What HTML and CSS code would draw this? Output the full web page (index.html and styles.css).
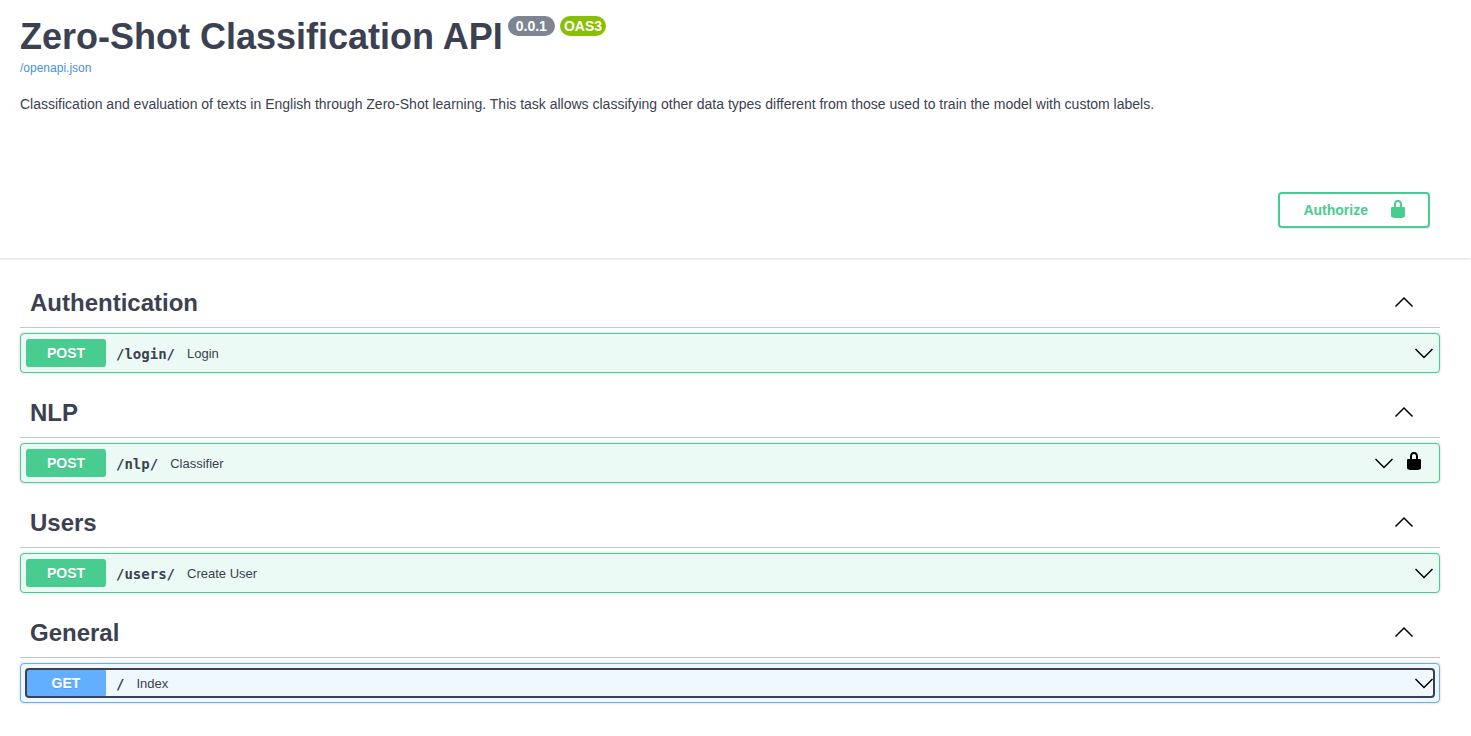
FILE: index.html
```html
<!DOCTYPE html>
<html lang="en">
<head>
<meta charset="utf-8">
<title>Zero-Shot Classification API</title>
<link rel="stylesheet" href="styles.css">
</head>
<body>
<svg class="sprite" aria-hidden="true">
  <symbol id="up" viewBox="0 0 20 20"><path d="M1.5 13.5 10 5 18.5 13.5" fill="none" stroke="currentColor" stroke-width="1.5"/></symbol>
  <symbol id="down" viewBox="0 0 20 20"><path d="M1.5 6 10 14.5 18.5 6" fill="none" stroke="currentColor" stroke-width="1.5"/></symbol>
  <symbol id="lock" viewBox="0 0 20 20"><path fill="currentColor" d="M15.8 8H14V5.6C14 2.703 12.665 1 10 1 7.334 1 6 2.703 6 5.6V8H4c-.553 0-1 .646-1 1.199V17c0 .549.428 1.139.951 1.307l1.197.387C5.672 18.861 6.55 19 7.1 19h5.8c.549 0 1.428-.139 1.951-.307l1.196-.387c.524-.167.953-.757.953-1.306V9.199C17 8.646 16.352 8 15.8 8zM12 8H8V5.199C8 3.754 8.797 3 10 3c1.203 0 2 .754 2 2.199V8z"/></symbol>
</svg>
<header class="info">
  <div class="title-row">
    <h1 class="title">Zero-Shot Classification API</h1>
    <span class="badge version">0.0.1</span>
    <span class="badge oas">OAS3</span>
  </div>
  <a class="spec-link" href="/openapi.json">/openapi.json</a>
  <p class="description">Classification and evaluation of texts in English through Zero-Shot learning. This task allows classifying other data types different from those used to train the model with custom labels.</p>
</header>
<section class="schemes">
  <button class="authorize" type="button"><span>Authorize</span><svg class="icon"><use href="#lock"/></svg></button>
</section>
<main class="operations">
  <section class="tag">
    <div class="tag-header"><h2 class="tag-name">Authentication</h2><button class="icon-button" type="button" aria-label="Collapse Authentication"><svg class="icon"><use href="#up"/></svg></button></div>
    <div class="operation post">
      <button class="summary" type="button"><span class="method">POST</span><span class="path">/login/</span><span class="label">Login</span><svg class="icon"><use href="#down"/></svg></button>
    </div>
  </section>
  <section class="tag">
    <div class="tag-header"><h2 class="tag-name">NLP</h2><button class="icon-button" type="button" aria-label="Collapse NLP"><svg class="icon"><use href="#up"/></svg></button></div>
    <div class="operation post">
      <button class="summary" type="button"><span class="method">POST</span><span class="path">/nlp/</span><span class="label">Classifier</span><svg class="icon"><use href="#down"/></svg></button>
      <button class="icon-button lock" type="button" aria-label="Authorization required"><svg class="icon"><use href="#lock"/></svg></button>
    </div>
  </section>
  <section class="tag">
    <div class="tag-header"><h2 class="tag-name">Users</h2><button class="icon-button" type="button" aria-label="Collapse Users"><svg class="icon"><use href="#up"/></svg></button></div>
    <div class="operation post">
      <button class="summary" type="button"><span class="method">POST</span><span class="path">/users/</span><span class="label">Create User</span><svg class="icon"><use href="#down"/></svg></button>
    </div>
  </section>
  <section class="tag">
    <div class="tag-header"><h2 class="tag-name">General</h2><button class="icon-button" type="button" aria-label="Collapse General"><svg class="icon"><use href="#up"/></svg></button></div>
    <div class="operation get">
      <button class="summary focused" type="button"><span class="method">GET</span><span class="path">/</span><span class="label">Index</span><svg class="icon"><use href="#down"/></svg></button>
    </div>
  </section>
</main>
</body>
</html>
```
FILE: styles.css
```css
* { box-sizing: border-box; }
body {
  margin: 0;
  background: #fff;
  color: #3b4151;
  font-family: "Liberation Sans", Arial, sans-serif;
}
button {
  margin: 0;
  padding: 0;
  border: 0;
  background: none;
  color: #000;
  font: inherit;
  cursor: pointer;
}
.sprite { display: none; }
.icon { display: block; flex: none; width: 20px; height: 20px; }

.info { padding: 16px 31px 0 20px; }
.title-row { display: flex; align-items: flex-start; gap: 5px; }
.title { margin: 0; font-size: 36px; line-height: 42px; }
.badge {
  border-radius: 10px;
  color: #fff;
  font-size: 14px;
  font-weight: bold;
  line-height: 20px;
}
.version { padding: 0 8px; background: #7d8492; }
.oas { padding: 0 4px; background: #89bf04; }
.spec-link {
  display: block;
  width: fit-content;
  margin-top: 2px;
  color: #4990e2;
  font-size: 12px;
  line-height: 16px;
  text-decoration: none;
}
.description { margin: 20px 0 0; font-size: 14px; line-height: 16px; }

.schemes {
  display: flex;
  justify-content: flex-end;
  padding: 80px 41px 30px 20px;
  box-shadow: 0 1px 2px rgba(0, 0, 0, .15);
}
.authorize {
  display: flex;
  align-items: center;
  gap: 20px;
  height: 36px;
  padding: 0 20px 2px 23px;
  border: 2px solid #49cc90;
  border-radius: 4px;
  box-shadow: 0 1px 2px rgba(0, 0, 0, .1);
  color: #49cc90;
  font-size: 14px;
  font-weight: bold;
  line-height: 20px;
}
.authorize span { padding-top: 2px; }

.operations { padding: 20px 31px 18px 20px; }
.tag { padding-bottom: 15px; }
.tag-header {
  display: flex;
  align-items: center;
  justify-content: space-between;
  margin-bottom: 5px;
  padding: 10px 26px 10px 10px;
  border-bottom: 1px solid rgba(59, 65, 81, .3);
}
.tag-name { margin: 0; font-size: 24px; line-height: 29px; }
.operation {
  display: flex;
  align-items: center;
  padding: 5px;
  border: 1px solid;
  border-radius: 4px;
  box-shadow: 0 0 3px rgba(0, 0, 0, .19);
}
.post { border-color: #49cc90; background: #ebfaf4; }
.get { border-color: #61affe; background: #eff7ff; }
.summary {
  display: flex;
  flex: 1;
  align-items: center;
  border-radius: 3px;
  color: #3b4151;
  text-align: left;
}
.summary .icon { color: #000; }
.focused { outline: 2px solid #3b4151; outline-offset: -1px; }
.method {
  width: 80px;
  border-radius: 3px;
  color: #fff;
  font-size: 14px;
  font-weight: bold;
  line-height: 28px;
  text-align: center;
  text-shadow: 0 1px 0 rgba(0, 0, 0, .1);
}
.post .method { background: #49cc90; }
.get .method { background: #61affe; }
.path {
  padding: 1px 12px 0 10px;
  font-family: "DejaVu Sans Mono", monospace;
  font-size: 14px;
  font-weight: bold;
}
.label { flex: 1; font-size: 13px; }
.lock { padding: 0 10px 4px; }
```
